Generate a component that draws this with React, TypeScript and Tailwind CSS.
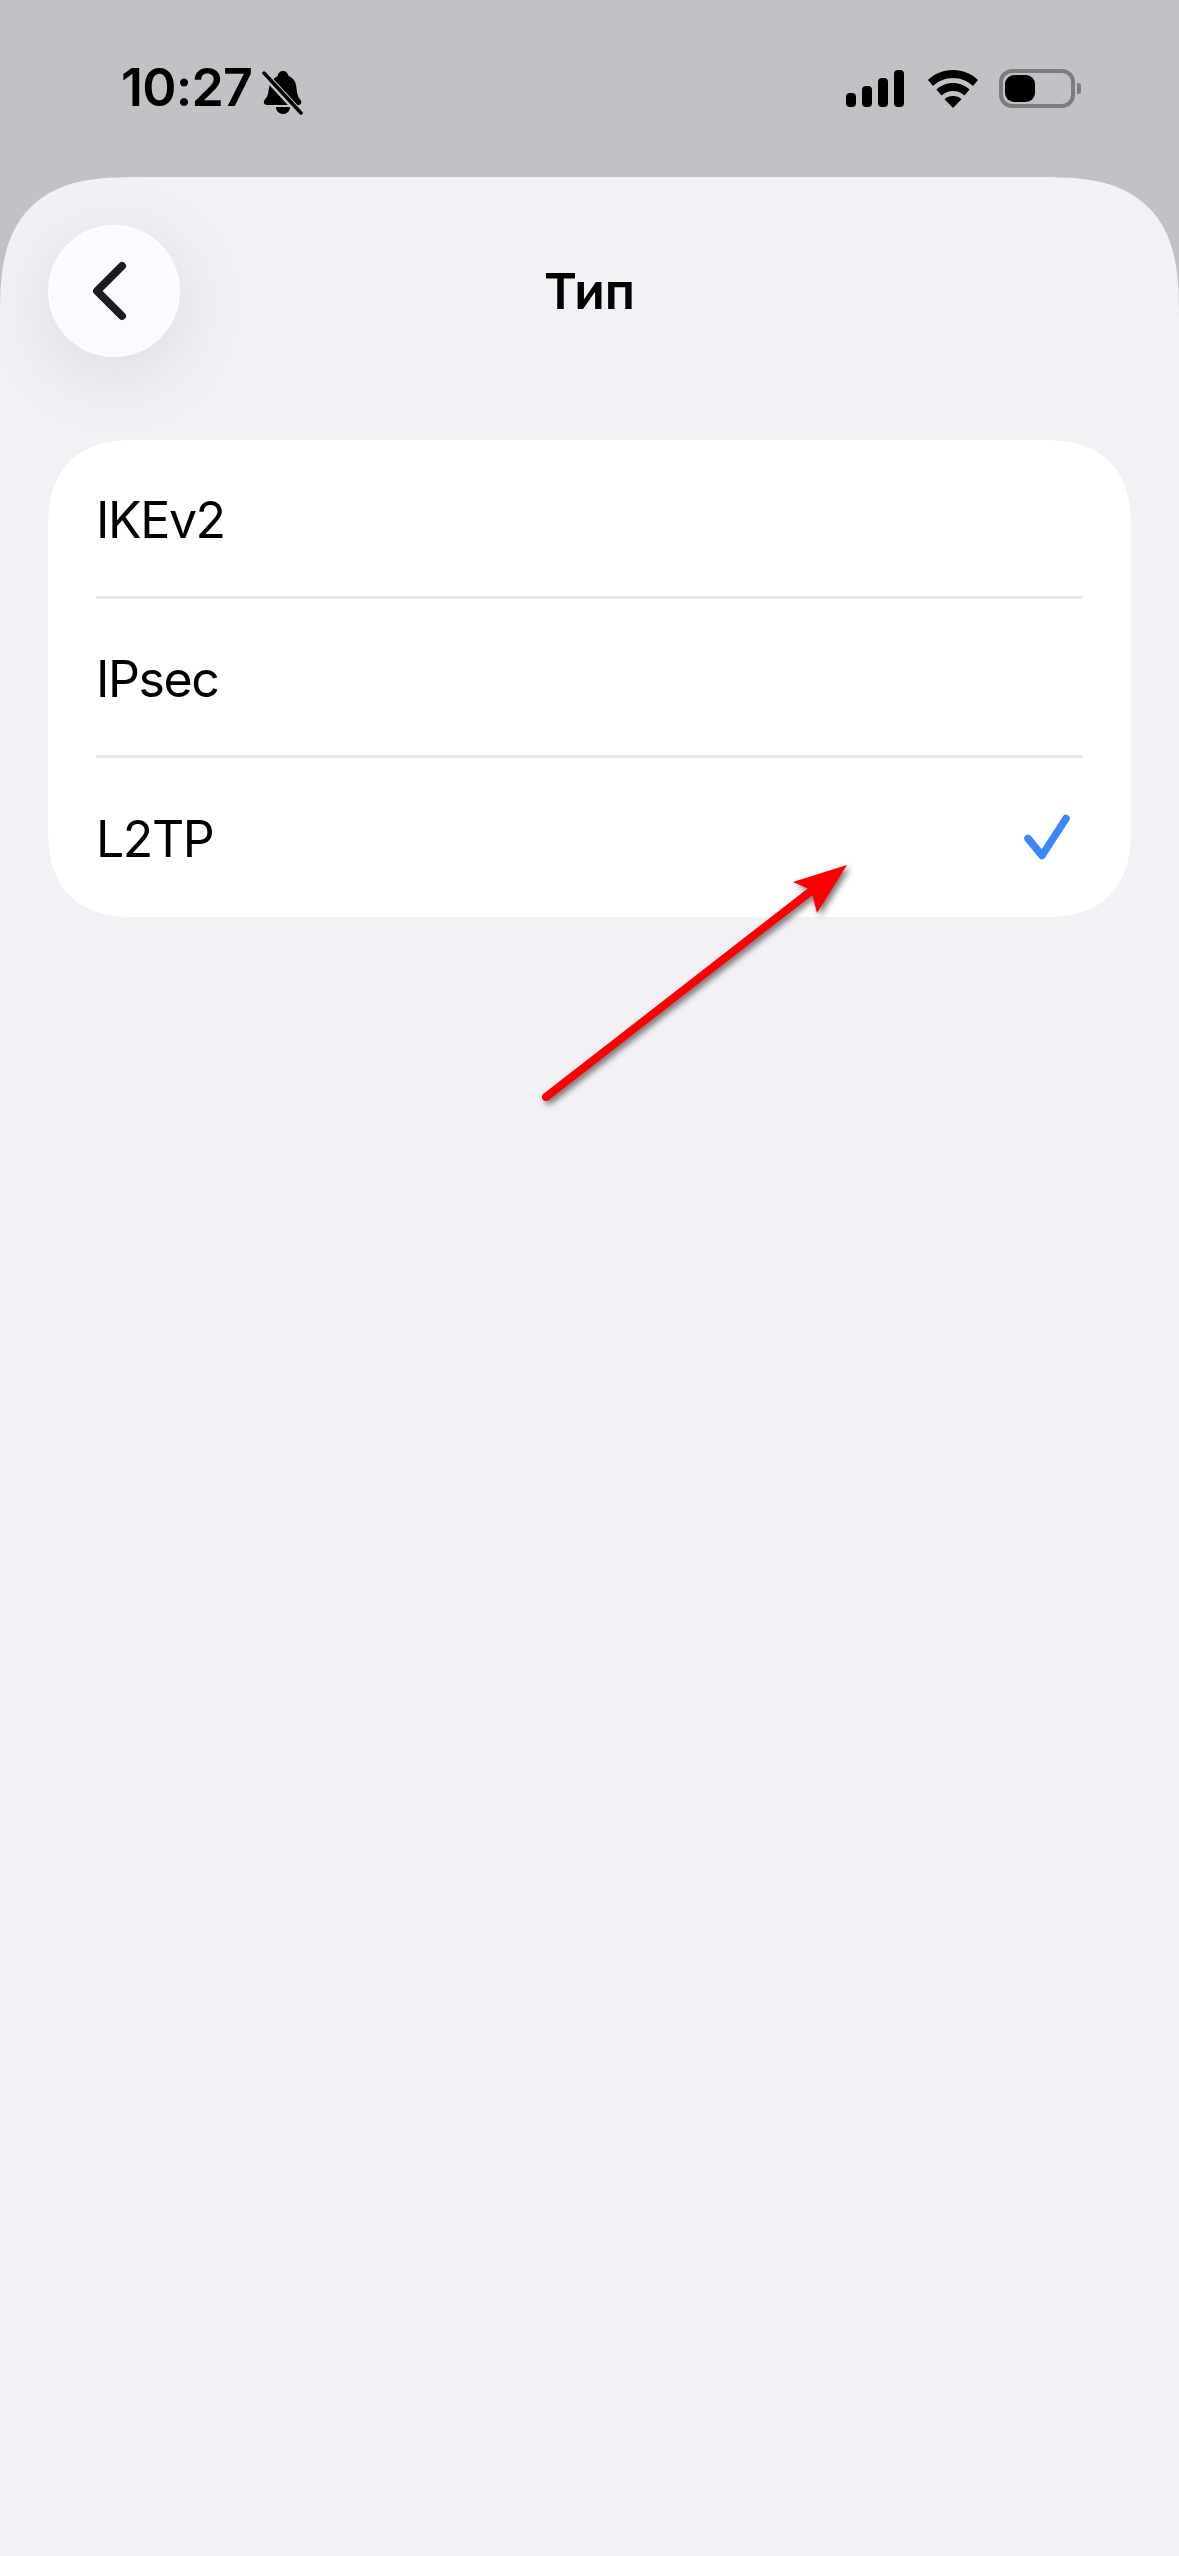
const ROWS = [
  { label: "IKEv2", height: "h-[156px]" },
  { label: "IPsec", height: "h-[156px]" },
  { label: "L2TP", height: "h-[159px]", checked: true },
];

function BellOff() {
  return (
    <svg width="42" height="46" viewBox="0 0 42 46" className="ml-[10px] mt-[1px]">
      <path
        d="M21 1c3 0 5 2 5.500 5 5 2 7.500 6 8 12 .5 6 1.500 9 4 12 1.500 2 1 5-2 5H5c-3 0-4-3-2.500-5 2.500-3 3.500-5 4-9 .5-3 1-6 2-8C11 9 13 7.500 15.500 6 16 3 18 1 21 1Z"
        fill="#000"
      />
      <path d="M14 37h14c0 4-3 7-7 7s-7-3-7-7Z" fill="#000" />
      <path d="M1 3 38 43" stroke="#c2c1c6" strokeWidth="7" />
      <path d="M2 3 39 43" stroke="#000" strokeWidth="3.500" strokeLinecap="round" />
    </svg>
  );
}

function StatusIcons() {
  return (
    <div className="flex items-center">
      <svg width="60" height="38" viewBox="0 0 60 38" fill="#000">
        <rect x="0" y="23" width="10" height="14" rx="4" />
        <rect x="16" y="16" width="10" height="21" rx="4" />
        <rect x="32" y="8" width="10" height="29" rx="4" />
        <rect x="48" y="0" width="10" height="37" rx="4" />
      </svg>
      <svg width="52" height="38" viewBox="0 0 52 38" fill="#000" className="ml-[21px]">
        <path d="M26 0c10 0 18.500 3.700 25 10l-5 6c-5.200-5-12-8-20-8S11.200 11 6 16l-5-6C7.500 3.700 16 0 26 0Z" />
        <path d="M26 13c6.500 0 12 2.500 16.500 6.500l-5 6C34.500 22.800 30.500 21 26 21s-8.500 1.800-11.500 4.500l-5-6C14 15.500 19.500 13 26 13Z" />
        <path d="M26 26c3.500 0 6.300 1.200 8.500 3.200L26 38l-8.500-8.800C19.700 27.200 22.500 26 26 26Z" />
      </svg>
      <div className="ml-[20px] flex items-center">
        <div className="w-[76px] h-[39px] rounded-[13px] border-[4px] border-[#7d7d80] p-[2px] flex">
          <div className="w-[30px] h-full rounded-[9px] bg-black" />
        </div>
        <div className="ml-[2px] w-[4px] h-[11px] rounded-r-[3px] bg-[#7d7d80]" />
      </div>
    </div>
  );
}

function Arrow() {
  return (
    <svg
      width="1179"
      height="2556"
      viewBox="0 0 1179 2556"
      className="absolute left-0 top-0 pointer-events-none drop-shadow-[3px_3px_3px_rgba(0,0,0,0.55)]"
    >
      <path d="M546 1097 815 888" stroke="#ff0000" strokeWidth="8" strokeLinecap="round" />
      <path d="M847 865 793 882 811 890 817 913Z" fill="#ff0000" />
    </svg>
  );
}

export default function App() {
  return (
    <div className="relative w-[1179px] h-[2556px] overflow-hidden flex flex-col bg-[#c2c1c6] font-['Inter',sans-serif] text-black">
      <div className="h-[177px] shrink-0 flex items-start justify-between pl-[121px] pr-[98px] pt-[69px]">
        <div className="flex items-start">
          <span className="text-[52px] leading-[38px] font-semibold tracking-[-0.8px]">10:27</span>
          <BellOff />
        </div>
        <StatusIcons />
      </div>

      <div className="flex-1 bg-[#f1f1f6] rounded-t-[140px] [corner-shape:superellipse(1.5)] px-[48px] pt-[48px]">
        <div className="relative flex items-center justify-center h-[132px]">
          <button className="absolute left-0 top-0 w-[132px] h-[132px] rounded-full bg-[#fbfbff] border-[2px] border-[#fdfdff] flex items-center justify-center shadow-[0_16px_80px_rgba(0,0,0,0.1)]">
            <svg width="44" height="60" viewBox="0 0 44 60" fill="none" className="mr-[4px]">
              <path d="M32 5 7 30l25 25" stroke="#1b1b20" strokeWidth="8" strokeLinecap="round" strokeLinejoin="round" />
            </svg>
          </button>
          <h1 className="text-[50px] leading-none font-semibold">Тип</h1>
        </div>

        <div className="mt-[83px] bg-white rounded-[88px] [corner-shape:superellipse(1.3)] overflow-hidden">
          {ROWS.map((row, i) => (
            <div key={row.label}>
              {i > 0 && <div className="ml-[48px] mr-[48px] h-[3px] bg-[#e8e8e8]" />}
              <div className={`${row.height} flex items-center justify-between pl-[48px] pr-[55px]`}>
                <span className="text-[50px] leading-none tracking-[-1.4px] pt-[3px]">{row.label}</span>
                {row.checked && (
                  <svg width="52" height="50" viewBox="0 0 52 50" fill="none">
                    <path d="M4 25.500 18 42.500 42 5.500" stroke="#3b87f7" strokeWidth="7.500" strokeLinecap="round" strokeLinejoin="round" />
                  </svg>
                )}
              </div>
            </div>
          ))}
        </div>
      </div>

      <Arrow />
    </div>
  );
}
